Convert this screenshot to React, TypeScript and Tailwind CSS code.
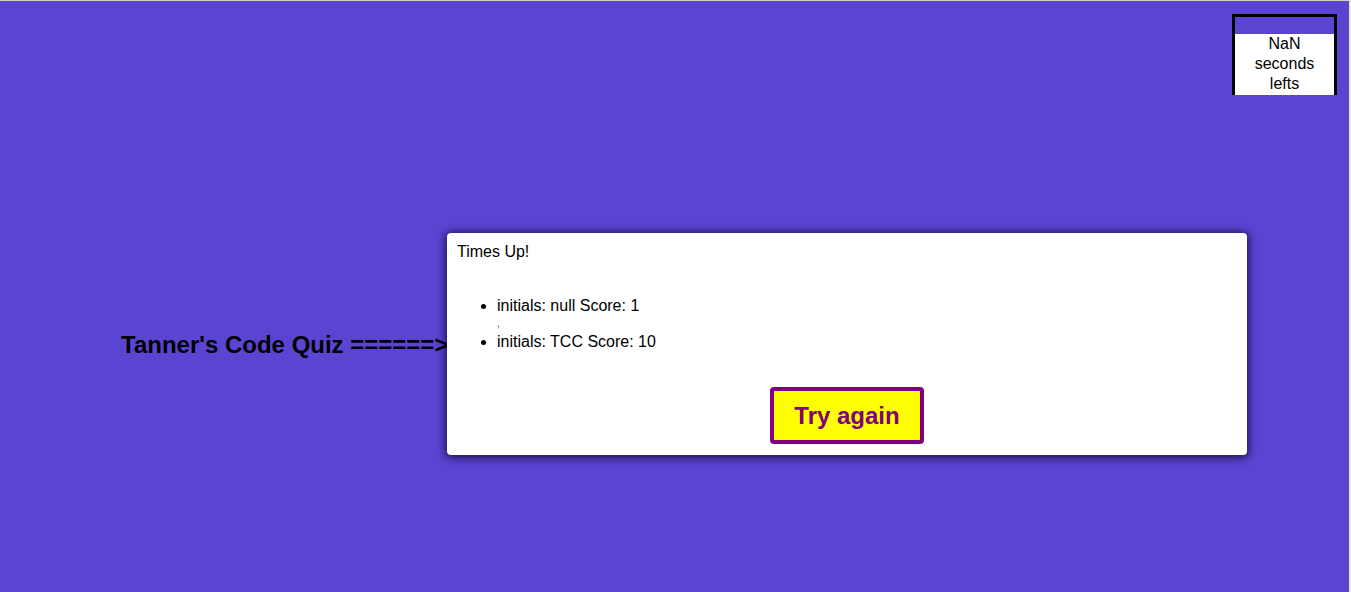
export default function App() {
  return (
    <div
      className="relative h-[592px] w-[1351px] overflow-hidden bg-[#5a45d3] border-t border-t-[#d0d0d0] border-r-2 border-r-[#e8e8e8] text-black"
      style={{ fontFamily: '"Liberation Sans", Arial, sans-serif' }}
    >
      {/* timer */}
      <div className="absolute left-[1232px] top-[13px] w-[105px] h-[81px] border-x-[3px] border-t-[3px] border-black bg-[#5a45d3] flex flex-col">
        <div className="h-[17px] shrink-0" />
        <div className="flex-1 bg-white text-center text-[16px] leading-[20px]">
          <div>NaN</div>
          <div>seconds</div>
          <div>lefts</div>
        </div>
      </div>

      <div className="flex items-center pl-[121px] pt-[232px]">
        <h2 className="text-[24px] font-bold leading-none whitespace-nowrap w-[326px] pt-[1px]">
          Tanner's Code Quiz ======&gt;
        </h2>
        <div className="w-[800px] h-[222px] bg-white rounded-[4px] shadow-[0_1px_8px_2px_rgba(20,10,60,0.85)] px-[10px] flex flex-col">
          <p className="text-[16px] leading-[18px] mt-[10px]">Times Up!</p>
          <ul className="list-disc pl-[40px] mt-[36px] text-[16px] leading-[18px]">
            <li>initials: null Score: 1</li>
            <li className="mt-[18px] relative">
              <span className="absolute left-0 -top-[14px] text-[10px] leading-none text-[#8a4a00]">,</span>
              initials: TCC Score: 10
            </li>
          </ul>
          <div className="flex justify-center mt-auto mb-[11px]">
            <button className="w-[154px] h-[57px] bg-[#ffff00] border-[4px] border-[#800080] rounded-[4px] text-[#800080] text-[24px] font-bold">
              Try again
            </button>
          </div>
        </div>
      </div>
    </div>
  )
}
